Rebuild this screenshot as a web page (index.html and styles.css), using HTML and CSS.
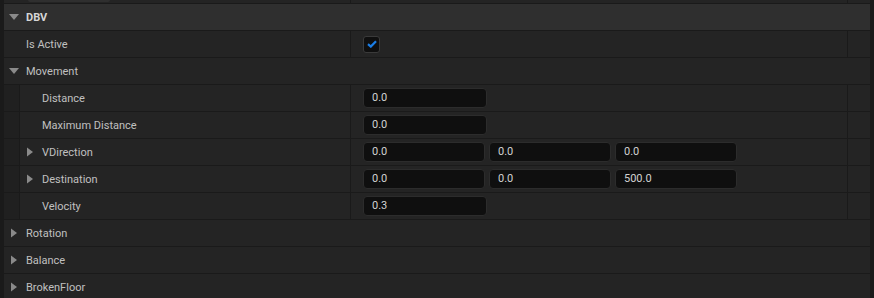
FILE: index.html
```html
<!DOCTYPE html>
<html lang="en">
<head>
    <meta charset="UTF-8">
    <title>Details - DBV</title>
    <link rel="stylesheet" href="styles.css">
</head>
<body>
    <div class="panel">
        <!-- tail of the previous row -->
        <div class="row prop top-strip">
            <div class="name"><span class="combo"></span></div>
            <div class="value"></div>
            <div class="reset"></div>
        </div>

        <div class="row category">
            <span class="arrow"><svg width="10" height="6" viewBox="0 0 10 6"><path d="M0 0H10L5 6Z"/></svg></span>
            <span class="label">DBV</span>
        </div>

        <div class="row prop">
            <div class="name plain"><span class="label">Is Active</span></div>
            <div class="value">
                <span class="checkbox"><svg width="10" height="8" viewBox="0 0 10 8"><path d="M1 4.2L3.8 6.6L9 1.2" fill="none" stroke="#1b7ee6" stroke-width="2.2"/></svg></span>
            </div>
            <div class="reset"></div>
        </div>

        <div class="row group">
            <span class="arrow"><svg width="10" height="6" viewBox="0 0 10 6"><path d="M0 0H10L5 6Z"/></svg></span>
            <span class="label">Movement</span>
        </div>

        <div class="row prop">
            <div class="name child">
                <span class="indent"></span>
                <span class="label plain">Distance</span>
            </div>
            <div class="value"><span class="field">0.0</span></div>
            <div class="reset"></div>
        </div>

        <div class="row prop">
            <div class="name child">
                <span class="indent"></span>
                <span class="label plain">Maximum Distance</span>
            </div>
            <div class="value"><span class="field">0.0</span></div>
            <div class="reset"></div>
        </div>

        <div class="row prop">
            <div class="name child">
                <span class="indent"></span>
                <span class="arrow"><svg width="6" height="10" viewBox="0 0 6 10"><path d="M0 0.5L6 5L0 9.5Z"/></svg></span>
                <span class="label">VDirection</span>
            </div>
            <div class="value">
                <div class="vector">
                    <span class="field">0.0</span>
                    <span class="field">0.0</span>
                    <span class="field">0.0</span>
                </div>
            </div>
            <div class="reset"></div>
        </div>

        <div class="row prop">
            <div class="name child">
                <span class="indent"></span>
                <span class="arrow"><svg width="6" height="10" viewBox="0 0 6 10"><path d="M0 0.5L6 5L0 9.5Z"/></svg></span>
                <span class="label">Destination</span>
            </div>
            <div class="value">
                <div class="vector">
                    <span class="field">0.0</span>
                    <span class="field">0.0</span>
                    <span class="field">500.0</span>
                </div>
            </div>
            <div class="reset"></div>
        </div>

        <div class="row prop">
            <div class="name child">
                <span class="indent"></span>
                <span class="label plain">Velocity</span>
            </div>
            <div class="value"><span class="field">0.3</span></div>
            <div class="reset"></div>
        </div>

        <div class="row group">
            <span class="arrow"><svg width="6" height="10" viewBox="0 0 6 10"><path d="M0 0.5L6 5L0 9.5Z"/></svg></span>
            <span class="label">Rotation</span>
        </div>

        <div class="row group">
            <span class="arrow"><svg width="6" height="10" viewBox="0 0 6 10"><path d="M0 0.5L6 5L0 9.5Z"/></svg></span>
            <span class="label">Balance</span>
        </div>

        <div class="row group">
            <span class="arrow"><svg width="6" height="10" viewBox="0 0 6 10"><path d="M0 0.5L6 5L0 9.5Z"/></svg></span>
            <span class="label">BrokenFloor</span>
        </div>
    </div>
</body>
</html>
```

FILE: styles.css
```css
html, body {
    margin: 0;
    height: 100%;
    overflow: hidden;
    background-color: #1b1b1b;
}
body {
    font-family: Roboto, "Noto Sans", sans-serif;
    font-size: 11px;
    color: #c0c0c0;
}
.panel {
    display: flex;
    flex-direction: column;
    gap: 1px;
    padding: 0 4px;
    background-color: #1a1a1a;
}
.row {
    height: 26px;
    flex: 0 0 26px;
    display: flex;
    align-items: center;
    background-color: #242424;
}
.row.prop {
    display: grid;
    grid-template-columns: 346px 1fr 22px;
    column-gap: 1px;
    background-color: #1a1a1a;
}
.row.prop > div {
    height: 100%;
    display: flex;
    align-items: center;
    background-color: #242424;
}
.top-strip {
    height: 3px;
    flex-basis: 3px;
}
.combo {
    display: block;
    align-self: flex-start;
    margin-left: 24px;
    width: 82px;
    height: 2px;
    background-color: #2f2f2f;
    border-radius: 0 0 3px 3px;
}
.category {
    background-color: #2f2f2f;
    padding-left: 5px;
}
.category .label {
    font-weight: bold;
    color: #d6d6d6;
}
.group {
    padding-left: 5px;
}
.arrow {
    width: 10px;
    display: flex;
    justify-content: center;
    margin-right: 7px;
}
.arrow svg {
    fill: #8a8a8a;
}
.name.plain {
    padding-left: 22px;
}
.name.child .indent {
    width: 15px;
    height: 100%;
    background-color: #202020;
    border-right: 1px solid #1a1a1a;
    margin-right: 5px;
}
.name.child .label.plain {
    margin-left: 17px;
}
.value {
    padding-left: 12px;
}
.checkbox {
    width: 15px;
    height: 15px;
    border: 1px solid #3a3a3a;
    border-radius: 3px;
    background-color: #0f0f0f;
    display: flex;
    align-items: center;
    justify-content: center;
}
.field {
    box-sizing: border-box;
    width: 124px;
    height: 20px;
    padding: 0 8px;
    line-height: 18px;
    border: 1px solid #2c2c2c;
    border-radius: 4px;
    background-color: #0f0f0f;
    color: #d2d2d2;
}
.vector {
    display: flex;
    gap: 4px;
}
.vector .field {
    width: 122px;
}
```
